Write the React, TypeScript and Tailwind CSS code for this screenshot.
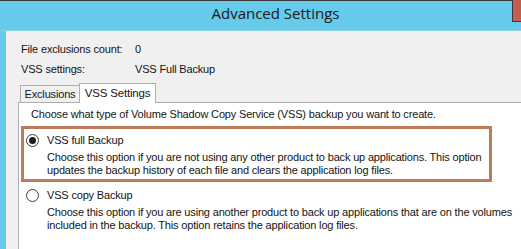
import React, { useState } from "react";

const Radio = ({ checked }: { checked: boolean }) => (
  <span className="w-[13px] h-[13px] rounded-full border border-[#3c3c3c] bg-white flex items-center justify-center shrink-0">
    {checked && <span className="w-[7px] h-[7px] rounded-full bg-[#1e1e1e]" />}
  </span>
);

const App = () => {
  const [mode, setMode] = useState("full");

  return (
    <div
      className="w-[521px] h-[249px] overflow-hidden bg-[#66caea] flex flex-col text-[11px] tracking-[-0.17px] text-[#141414]"
      style={{ fontFamily: "'Liberation Sans', Arial, sans-serif" }}
    >
      {/* title bar */}
      <div className="h-px bg-[#3a3a3a]" />
      <div className="relative h-[29px] flex items-center justify-center pb-[4px]">
        <span className="text-[15px] tracking-normal text-[#1a1a1a] pl-[30px]" style={{ fontFamily: "'Open Sans', sans-serif" }}>
          Advanced Settings
        </span>
        <div className="absolute right-0 -top-px w-[9px] h-[22px] bg-[#c75c52] border-l border-b border-[#3a3a3a]" />
      </div>
      <div className="h-px bg-[#8ccde2]" />

      {/* body */}
      <div className="flex-1 ml-[6px] bg-[#f0f0f0] pt-[11px] pl-[15px] flex flex-col">
        <div className="grid grid-cols-[114px_1fr] gap-y-[6px] leading-[14px]">
          <span>File exclusions count:</span>
          <span>0</span>
          <span>VSS settings:</span>
          <span>VSS Full Backup</span>
        </div>

        {/* tabs */}
        <div className="mt-[6px] -ml-[3px] flex flex-col flex-1">
          <div className="flex items-end h-[20px] pl-[2px]">
            <div className="h-[17px] w-[60px] border border-b-0 border-[#adadad] bg-[#f0f0f0] flex items-center justify-center">
              Exclusions
            </div>
            <div className="h-[20px] w-[77px] -ml-px border border-b-0 border-[#adadad] bg-white flex items-center justify-center relative top-px z-10 text-[11.5px]">
              VSS Settings
            </div>
          </div>
          <div className="flex-1 bg-white border-l border-t border-[#adadad] pl-[12px] pt-[4px]">
            <p className="leading-[14px] whitespace-nowrap">
              Choose what type of Volume Shadow Copy Service (VSS) backup you want to create.
            </p>

            <div
              onClick={() => setMode("full")}
              className="mt-[5px] -ml-[10px] w-[471px] h-[56px] border-[3px] border-[#bc7c5a] pl-[2px] pt-[4px] cursor-default"
            >
              <div className="flex items-center gap-[8px] leading-[14px]">
                <Radio checked={mode === "full"} />
                <span>VSS full Backup</span>
              </div>
              <p className="pl-[21px] mt-[4px] leading-[13px] whitespace-nowrap">
                Choose this option if you are not using any other product to back up applications. This option
                <br />
                updates the backup history of each file and clears the application log files.
              </p>
            </div>

            <div onClick={() => setMode("copy")} className="mt-[6px] -ml-[5px] cursor-default">
              <div className="flex items-center gap-[8px] leading-[14px]">
                <Radio checked={mode === "copy"} />
                <span>VSS copy Backup</span>
              </div>
              <p className="pl-[21px] mt-[4px] leading-[13px] whitespace-nowrap">
                Choose this option if you are using another product to back up applications that are on the volumes
                <br />
                included in the backup. This option retains the application log files.
              </p>
            </div>
          </div>
        </div>
      </div>
    </div>
  );
};

export default App;
